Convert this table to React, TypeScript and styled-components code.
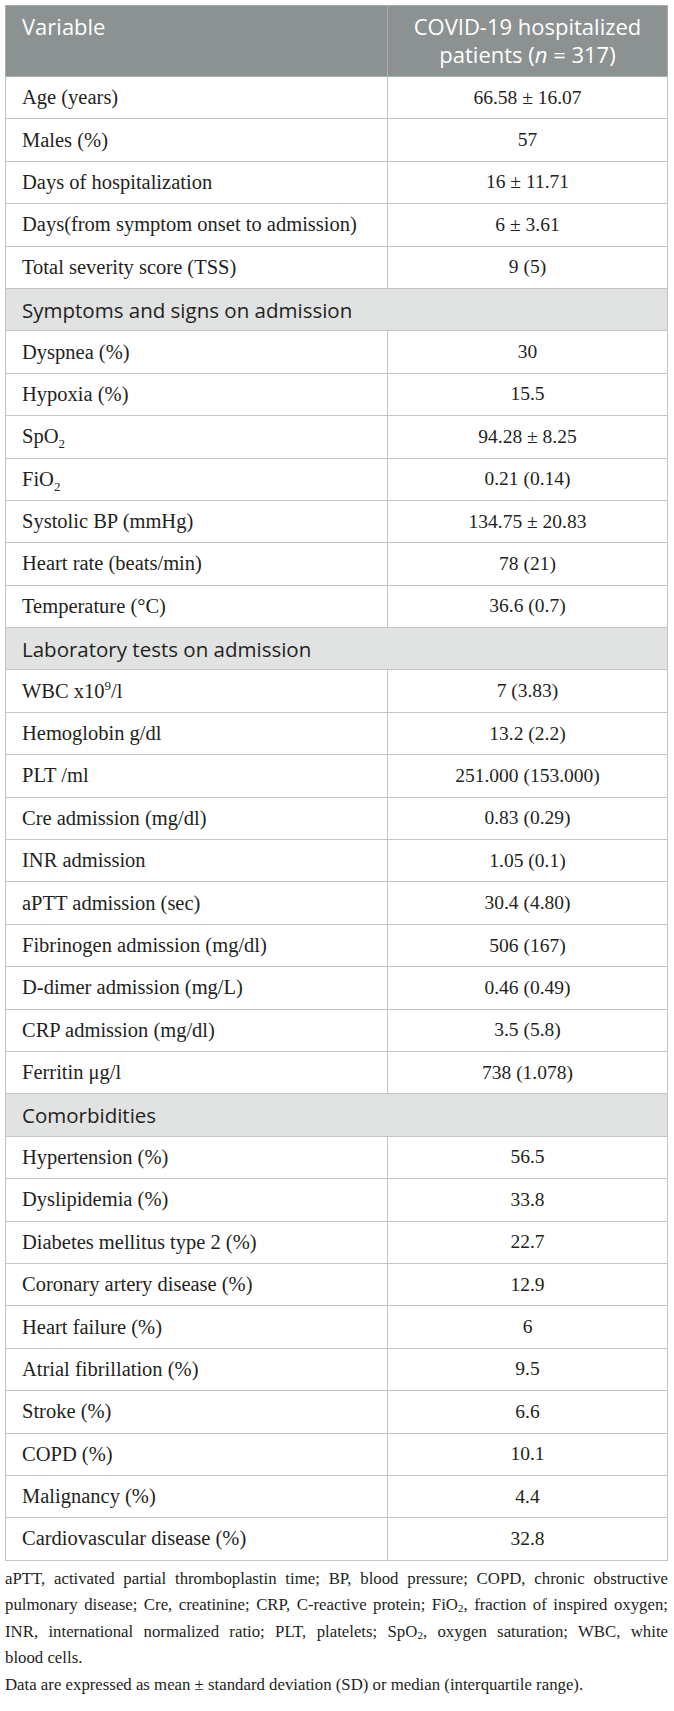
import React from "react";
import styled, { createGlobalStyle } from "styled-components";

type Row =
    | { kind: "section"; label: string }
    | { kind: "data"; label: React.ReactNode; value: React.ReactNode };

const rows: Array<Row> = [
    { kind: "data", label: "Age (years)", value: "66.58 ± 16.07" },
    { kind: "data", label: "Males (%)", value: "57" },
    { kind: "data", label: "Days of hospitalization", value: "16 ± 11.71" },
    {
        kind: "data",
        label: "Days(from symptom onset to admission)",
        value: "6 ± 3.61",
    },
    { kind: "data", label: "Total severity score (TSS)", value: "9 (5)" },
    { kind: "section", label: "Symptoms and signs on admission" },
    { kind: "data", label: "Dyspnea (%)", value: "30" },
    { kind: "data", label: "Hypoxia (%)", value: "15.5" },
    {
        kind: "data",
        label: (
            <>
                SpO<sub>2</sub>
            </>
        ),
        value: "94.28 ± 8.25",
    },
    {
        kind: "data",
        label: (
            <>
                FiO<sub>2</sub>
            </>
        ),
        value: "0.21 (0.14)",
    },
    { kind: "data", label: "Systolic BP (mmHg)", value: "134.75 ± 20.83" },
    { kind: "data", label: "Heart rate (beats/min)", value: "78 (21)" },
    { kind: "data", label: "Temperature (°C)", value: "36.6 (0.7)" },
    { kind: "section", label: "Laboratory tests on admission" },
    {
        kind: "data",
        label: (
            <>
                WBC x10<sup>9</sup>/l
            </>
        ),
        value: "7 (3.83)",
    },
    { kind: "data", label: "Hemoglobin g/dl", value: "13.2 (2.2)" },
    { kind: "data", label: "PLT /ml", value: "251.000 (153.000)" },
    { kind: "data", label: "Cre admission (mg/dl)", value: "0.83 (0.29)" },
    { kind: "data", label: "INR admission", value: "1.05 (0.1)" },
    { kind: "data", label: "aPTT admission (sec)", value: "30.4 (4.80)" },
    { kind: "data", label: "Fibrinogen admission (mg/dl)", value: "506 (167)" },
    { kind: "data", label: "D-dimer admission (mg/L)", value: "0.46 (0.49)" },
    { kind: "data", label: "CRP admission (mg/dl)", value: "3.5 (5.8)" },
    { kind: "data", label: "Ferritin μg/l", value: "738 (1.078)" },
    { kind: "section", label: "Comorbidities" },
    { kind: "data", label: "Hypertension (%)", value: "56.5" },
    { kind: "data", label: "Dyslipidemia (%)", value: "33.8" },
    { kind: "data", label: "Diabetes mellitus type 2 (%)", value: "22.7" },
    { kind: "data", label: "Coronary artery disease (%)", value: "12.9" },
    { kind: "data", label: "Heart failure (%)", value: "6" },
    { kind: "data", label: "Atrial fibrillation (%)", value: "9.5" },
    { kind: "data", label: "Stroke (%)", value: "6.6" },
    { kind: "data", label: "COPD (%)", value: "10.1" },
    { kind: "data", label: "Malignancy (%)", value: "4.4" },
    { kind: "data", label: "Cardiovascular disease (%)", value: "32.8" },
];

const App = () => {
    return (
        <Root>
            <GlobalStyle />
            <Table>
                <thead>
                    <tr>
                        <HeadCell align="left">Variable</HeadCell>
                        <HeadCell align="center">
                            COVID-19 hospitalized
                            <br />
                            patients (<i>n</i> = 317)
                        </HeadCell>
                    </tr>
                </thead>
                <tbody>
                    {rows.map((row, index) =>
                        row.kind === "section" ? (
                            <tr key={index}>
                                <SectionCell colSpan={2}>{row.label}</SectionCell>
                            </tr>
                        ) : (
                            <tr key={index}>
                                <LabelCell>{row.label}</LabelCell>
                                <ValueCell>{row.value}</ValueCell>
                            </tr>
                        )
                    )}
                </tbody>
            </Table>
            <Footnote>
                aPTT, activated partial thromboplastin time; BP, blood pressure;
                COPD, chronic obstructive pulmonary disease; Cre, creatinine; CRP,
                C-reactive protein; FiO<sub>2</sub>, fraction of inspired oxygen;
                INR, international normalized ratio; PLT, platelets; SpO
                <sub>2</sub>, oxygen saturation; WBC, white{" "}
                <NoWrap>blood cells.</NoWrap>
            </Footnote>
            <FootnoteLast>
                Data are expressed as mean ± standard deviation (SD) or median
                (interquartile range).
            </FootnoteLast>
        </Root>
    );
};

const GlobalStyle = createGlobalStyle`
    body {
        margin: 0;
        background: #ffffff;
    }
`;

const Root = styled.div`
    width: 674px;
    padding: 5px 6px 0 5px;
    box-sizing: border-box;
    font-family: "Liberation Serif", "Times New Roman", serif;
    color: #231f20;
`;

const Table = styled.table`
    width: 663px;
    border-collapse: collapse;
    border: 1px solid #c4c4c4;
    table-layout: fixed;
`;

const HeadCell = styled.th<{ align: "left" | "center" }>`
    background: #8c9192;
    color: #ffffff;
    font-family: "Open Sans", "Noto Sans", sans-serif;
    font-weight: 400;
    font-size: 22px;
    line-height: 28px;
    text-align: ${(p) => p.align};
    vertical-align: top;
    height: 71px;
    box-sizing: border-box;
    padding: 6px 16px 6px 16px;
    border: 1px solid #a9adad;
    &:first-child {
        width: 382px;
    }
    i {
        font-style: italic;
    }
`;

const LabelCell = styled.td`
    height: 42.4px;
    box-sizing: border-box;
    padding: 0 16px;
    border: 1px solid #c4c4c4;
    font-size: 20.5px;
    vertical-align: middle;
    sub,
    sup {
        font-size: 13px;
        line-height: 0;
    }
`;

const ValueCell = styled(LabelCell)`
    text-align: center;
    font-size: 19.5px;
`;

const SectionCell = styled.td`
    height: 42.4px;
    box-sizing: border-box;
    padding: 0 16px;
    background: #e1e2e2;
    border: 1px solid #c4c4c4;
    font-family: "Open Sans", "Noto Sans", sans-serif;
    font-size: 20.5px;
    color: #231f20;
    vertical-align: middle;
`;

const Footnote = styled.p`
    margin: 5px 0 0 0;
    font-size: 16.8px;
    line-height: 26.5px;
    text-align: justify;
    sub {
        font-size: 11px;
        line-height: 0;
        vertical-align: -0.2em;
    }
`;

const NoWrap = styled.span`
    white-space: nowrap;
`;

const FootnoteLast = styled(Footnote)`
    margin: 0;
    text-align: left;
`;

export default App;
